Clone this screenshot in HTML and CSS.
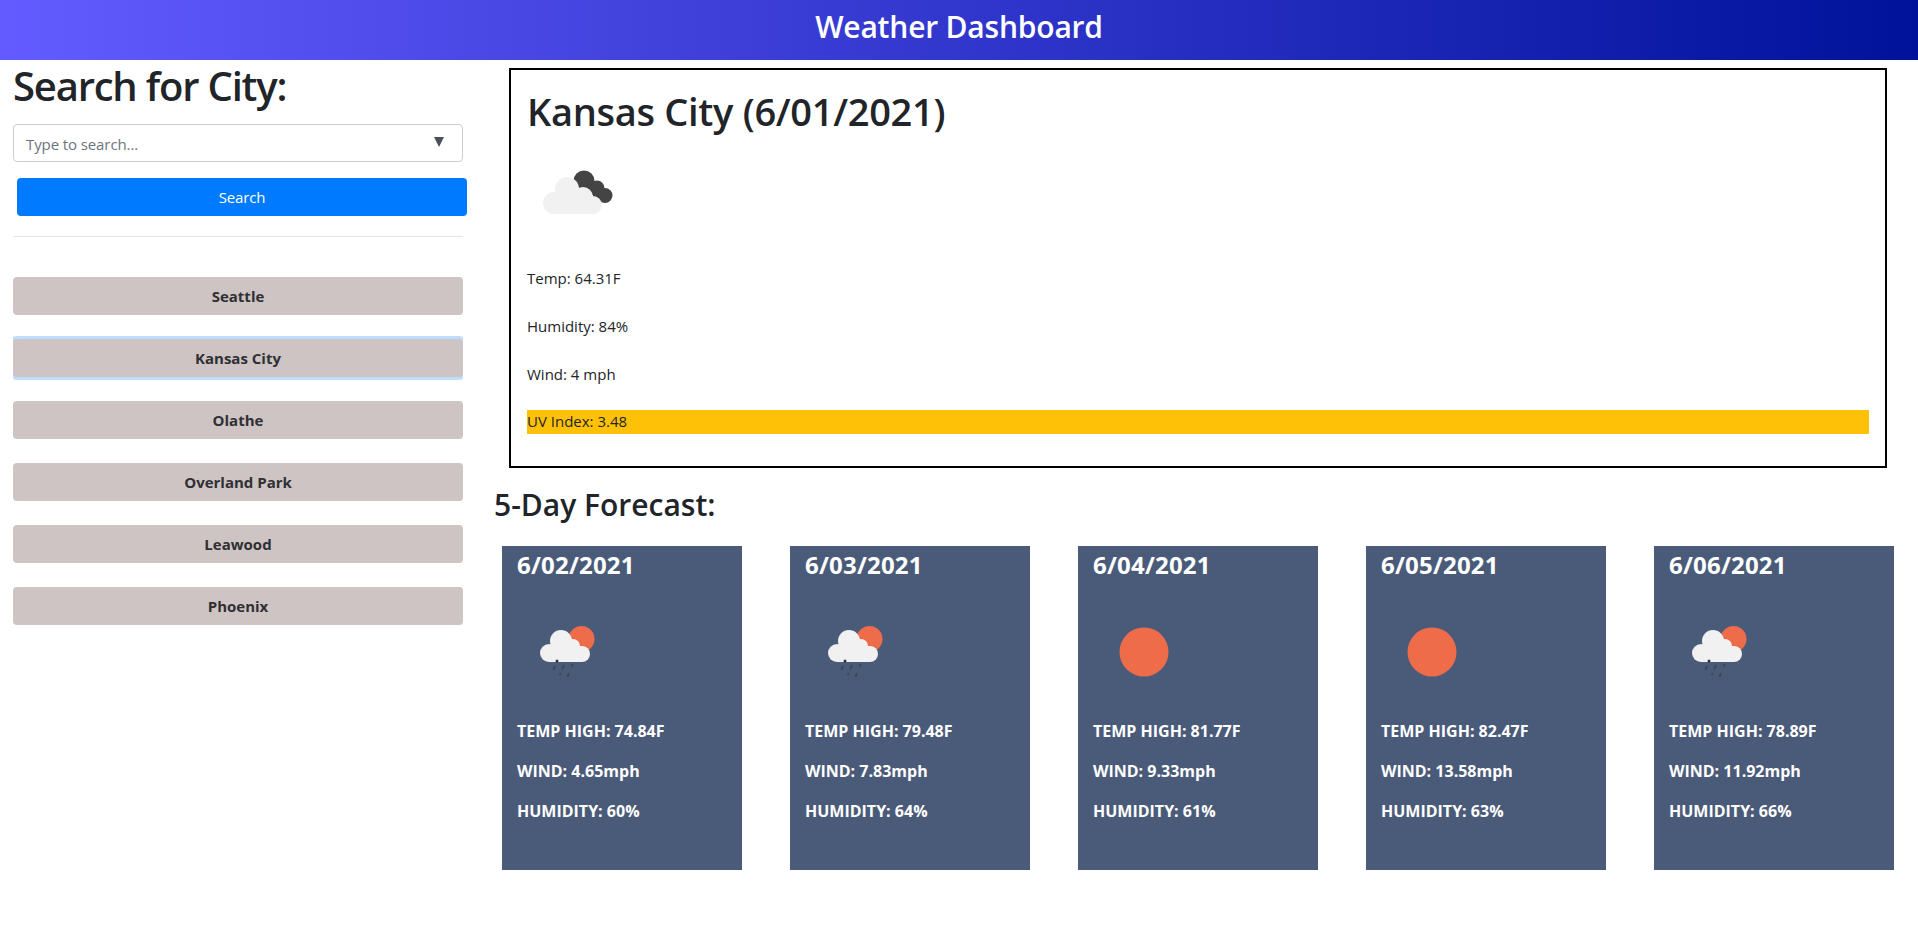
FILE: index.html
```html
<!DOCTYPE html>
<html lang="en">
<head>
<meta charset="utf-8">
<title>Weather Dashboard</title>
<link rel="stylesheet" href="styles.css">
</head>
<body>
<svg class="defs" width="0" height="0" aria-hidden="true">
  <defs>
    <symbol id="rain-sun" viewBox="0 0 100 100">
      <circle fill="#ef6c4a" cx="63.500" cy="39" r="13"/>
      <g fill="#f1f1f1">
        <circle cx="31" cy="53" r="9"/>
        <circle cx="43" cy="41" r="11"/>
        <circle cx="55" cy="46" r="7"/>
        <circle cx="64" cy="54" r="8"/>
        <rect x="31" y="46" width="33" height="16"/>
      </g>
      <circle fill="#2f333d" cx="39" cy="61" r="1.500"/>
      <g stroke="#3f4654" stroke-width="2">
        <path d="M37 66l-1.500 4M46 65l-1.500 4M55 64l-1.500 2.500M43 73l-1.500 2M51 73l-1.500 4"/>
      </g>
    </symbol>
    <symbol id="sun" viewBox="0 0 100 100">
      <circle fill="#ef6c4a" cx="50" cy="52" r="24.500"/>
    </symbol>
  </defs>
</svg>
<header class="banner">Weather Dashboard</header>
<div class="layout">
  <aside class="sidebar">
    <h2 class="search-title">Search for City:</h2>
    <div class="combo">
      <span class="combo-text">Type to search...</span>
      <span class="combo-arrow"></span>
    </div>
    <button class="search-btn">Search</button>
    <hr class="rule">
    <div class="cities">
      <button class="city">Seattle</button>
      <button class="city city-focus">Kansas City</button>
      <button class="city">Olathe</button>
      <button class="city">Overland Park</button>
      <button class="city">Leawood</button>
      <button class="city">Phoenix</button>
    </div>
  </aside>
  <main class="main">
    <section class="today">
      <h1 class="today-title">Kansas City (6/01/2021)</h1>
      <svg class="today-icon" viewBox="0 0 100 100">
        <g fill="#444">
          <circle cx="57" cy="31" r="10.500"/>
          <circle cx="70" cy="38" r="7.500"/>
          <circle cx="78" cy="45.500" r="7.500"/>
          <path d="M48 26L84 46L72 53L50 42z"/>
        </g>
        <g fill="#f1f1f1">
          <circle cx="27" cy="53" r="11"/>
          <circle cx="40" cy="39" r="12"/>
          <circle cx="56" cy="47" r="10"/>
          <circle cx="66" cy="55" r="9"/>
          <rect x="27" y="45" width="39" height="19"/>
        </g>
      </svg>
      <p class="stat">Temp: 64.31F</p>
      <p class="stat">Humidity: 84%</p>
      <p class="stat">Wind: 4 mph</p>
      <p class="stat stat-uv">UV Index: 3.48</p>
    </section>
    <h2 class="forecast-title">5-Day Forecast:</h2>
    <div class="forecast">
      <article class="card">
        <h3 class="card-date">6/02/2021</h3>
        <svg class="card-icon" viewBox="0 0 100 100"><use href="#rain-sun"/></svg>
        <p class="card-line">TEMP HIGH: 74.84F</p>
        <p class="card-line">WIND: 4.65mph</p>
        <p class="card-line">HUMIDITY: 60%</p>
      </article>
      <article class="card">
        <h3 class="card-date">6/03/2021</h3>
        <svg class="card-icon" viewBox="0 0 100 100"><use href="#rain-sun"/></svg>
        <p class="card-line">TEMP HIGH: 79.48F</p>
        <p class="card-line">WIND: 7.83mph</p>
        <p class="card-line">HUMIDITY: 64%</p>
      </article>
      <article class="card">
        <h3 class="card-date">6/04/2021</h3>
        <svg class="card-icon" viewBox="0 0 100 100"><use href="#sun"/></svg>
        <p class="card-line">TEMP HIGH: 81.77F</p>
        <p class="card-line">WIND: 9.33mph</p>
        <p class="card-line">HUMIDITY: 61%</p>
      </article>
      <article class="card">
        <h3 class="card-date">6/05/2021</h3>
        <svg class="card-icon" viewBox="0 0 100 100"><use href="#sun"/></svg>
        <p class="card-line">TEMP HIGH: 82.47F</p>
        <p class="card-line">WIND: 13.58mph</p>
        <p class="card-line">HUMIDITY: 63%</p>
      </article>
      <article class="card">
        <h3 class="card-date">6/06/2021</h3>
        <svg class="card-icon" viewBox="0 0 100 100"><use href="#rain-sun"/></svg>
        <p class="card-line">TEMP HIGH: 78.89F</p>
        <p class="card-line">WIND: 11.92mph</p>
        <p class="card-line">HUMIDITY: 66%</p>
      </article>
    </div>
  </main>
</div>
</body>
</html>
```
FILE: styles.css
```css
* { box-sizing: border-box; }
html, body { margin: 0; padding: 0; }
body {
  height: 927px;
  overflow: hidden;
  background: #fff;
  color: #212529;
  font-family: "Open Sans", "Noto Sans", sans-serif;
  font-size: 16px;
  line-height: 1.5;
}
.defs { position: absolute; }
.banner {
  height: 60px;
  line-height: 54px;
  text-align: center;
  color: #fff;
  font-size: 30px;
  font-weight: 600;
  letter-spacing: -0.2px;
  background: linear-gradient(90deg, #635bff 0%, #00129a 100%);
}
.layout { display: flex; }
.sidebar { width: 494px; padding: 0 0 0 13px; flex: none; }
.search-title {
  margin: 0 0 15px;
  height: 49px;
  font-size: 40px;
  font-weight: 600;
  line-height: 51px;
  letter-spacing: -1.200px;
}
.combo {
  width: 450px;
  height: 38px;
  border: 1px solid #ccc;
  border-radius: 4px;
  display: flex;
  align-items: center;
  justify-content: space-between;
  padding: 2px 18px 0 12px;
  background: #fff;
}
.combo-text { color: #6c757d; font-size: 15px; letter-spacing: -0.1px; }
.combo-arrow {
  width: 0; height: 0;
  border-left: 5.5px solid transparent;
  border-right: 5.5px solid transparent;
  border-top: 10px solid #495057;
  margin-bottom: 4px;
}
.search-btn {
  display: block;
  width: 450px;
  height: 38px;
  margin: 16px 0 0 4px;
  border: 0;
  border-radius: 4px;
  background: #007bff;
  color: #fff;
  font: 400 15px/1.5 "Open Sans", "Noto Sans", sans-serif;
  letter-spacing: -0.2px;
}
.rule { width: 450px; margin: 20px 0 0; border: 0; border-top: 1px solid #e3e5e7; }
.cities { display: flex; flex-direction: column; gap: 24px; margin-top: 40px; width: 450px; }
.city {
  height: 38px;
  border: 0;
  border-radius: 4px;
  background: #cec4c4;
  color: #2f3033;
  font: 700 15px/1.5 "Open Sans", "Noto Sans", sans-serif;
}
.city-focus { box-shadow: 0 0 0 3px rgba(0,123,255,.25); clip-path: inset(-3px 0); }
.main { flex: 1; min-width: 0; }
.today {
  margin: 8px 31px 0 15px;
  height: 400px;
  border: 2px solid #000;
  padding: 16px;
}
.today-title {
  margin: 0;
  height: 64px;
  font-size: 38px;
  font-weight: 600;
  line-height: 50px;
  letter-spacing: -0.3px;
}
.today-icon { display: block; width: 100px; height: 100px; margin-bottom: 17px; }
.stat { margin: 0 0 24px; height: 24px; font-size: 15px; }
.stat-uv { background: #ffc107; margin-top: -1px; }
.forecast-title {
  margin: 18px 0 0;
  height: 60px;
  font-size: 30px;
  font-weight: 600;
  line-height: 38px;
}
.forecast { display: flex; gap: 48px; padding-left: 8px; }
.card {
  width: 240px;
  height: 324px;
  flex: none;
  padding: 0 15px;
  background: #4a5b7a;
  color: #fff;
}
.card-date { margin: 0; height: 40px; font-size: 24px; font-weight: 700; line-height: 38px; letter-spacing: 0.2px; }
.card-icon { display: block; width: 100px; height: 100px; margin: 14px 0 19px 1px; }
.card-line { margin: 0 0 16px; height: 24px; font-size: 16px; font-weight: 700; }
```
